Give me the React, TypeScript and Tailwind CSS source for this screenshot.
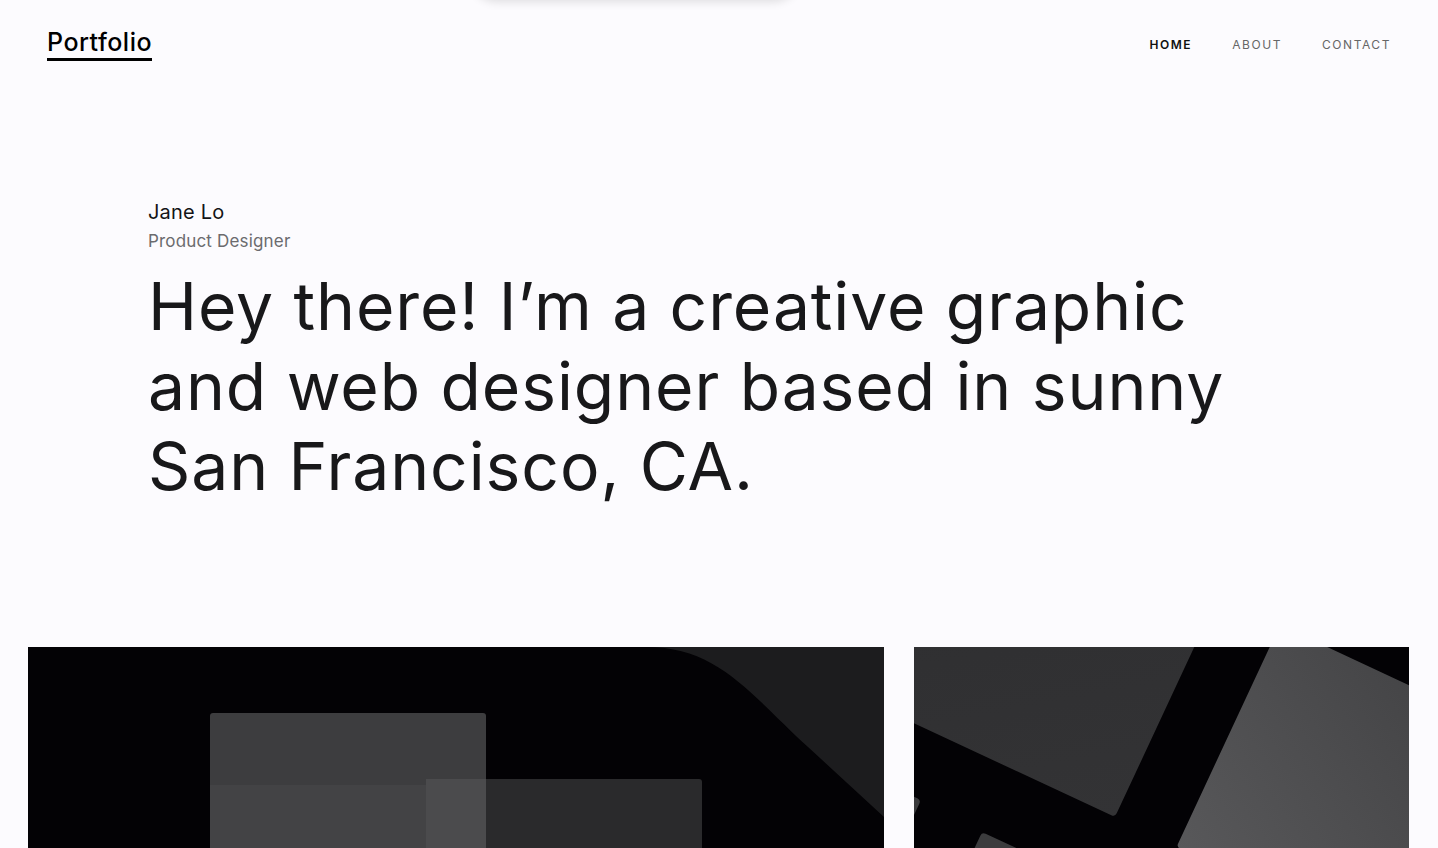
import React from 'react';

const font = { fontFamily: 'Inter, "DejaVu Sans", sans-serif' };

function LeftArt() {
  return (
    <svg viewBox="0 0 856 520" className="block w-full h-full" preserveAspectRatio="xMinYMin slice">
      <rect width="856" height="520" fill="#030205" />
      <path d="M618 0 C690 0 720 45 780 100 L856 170 V0 Z" fill="#1c1c1e" />
      <rect x="182" y="66" width="276" height="330" rx="3" fill="#3d3d3f" />
      <rect x="182" y="138" width="276" height="258" fill="#434345" />
      <rect x="398" y="132" width="276" height="276" rx="3" fill="#2a2a2c" />
      <rect x="398" y="132" width="60" height="264" fill="#4b4b4d" />
    </svg>
  );
}

function RightArt() {
  return (
    <svg viewBox="0 0 495 520" className="block w-full h-full" preserveAspectRatio="xMinYMin slice">
      <defs>
        <linearGradient id="gb" x1="1" y1="0" x2="0" y2="1">
          <stop offset="0" stopColor="#3c3c3e" />
          <stop offset="1" stopColor="#58585a" />
        </linearGradient>
        <linearGradient id="ga" x1="0" y1="0" x2="1" y2="1">
          <stop offset="0" stopColor="#2b2b2d" />
          <stop offset="1" stopColor="#333335" />
        </linearGradient>
      </defs>
      <rect width="495" height="520" fill="#030205" />
      <rect x="-420" y="-300" width="420" height="300" rx="4" fill="url(#ga)" transform="translate(201 170) rotate(25)" />
      <rect x="0" y="0" width="420" height="245" rx="4" fill="url(#gb)" transform="translate(366 -22) rotate(25)" />
      <rect x="-300" y="0" width="300" height="300" rx="4" fill="#3a3a3c" transform="translate(7 153) rotate(25)" />
      <rect x="0" y="0" width="300" height="300" rx="4" fill="#3c3c3e" transform="translate(68 185) rotate(25)" />
    </svg>
  );
}

export default function App() {
  return (
    <div className="relative min-h-screen bg-[#fcfbfe] text-[#141416] overflow-hidden" style={font}>
      <div className="absolute left-[468px] top-[-60px] w-[334px] h-[60px] rounded-[30px] bg-white shadow-[0_2px_10px_rgba(0,0,0,0.12)]" />

      <header className="h-[88px] flex items-center justify-between pl-[47px] pr-[47px]">
        <a className="inline-block text-[25px] font-medium leading-none tracking-[0.02em] text-black border-b-[3px] border-black pb-[3px] mt-[3px]">
          Portfolio
        </a>
        <nav className="flex items-center gap-[40px] text-[12px] tracking-[0.13em] leading-none mt-[2px]">
          <span className="font-semibold text-[#111]">HOME</span>
          <span className="text-[#666]">ABOUT</span>
          <span className="text-[#666]">CONTACT</span>
        </nav>
      </header>

      <section className="pl-[148px] pt-[112px]">
        <div className="text-[20px] leading-[24px] tracking-[0.01em] text-[#141416]">Jane Lo</div>
        <div className="mt-[7px] text-[17px] leading-[20px] tracking-[0.01em] text-[#6b6b6e]">Product Designer</div>
        <h1 className="mt-[15px] text-[66px] leading-[80px] font-normal tracking-[0.9px] text-[#18181a] max-w-[1120px]">
          Hey there! I’m a creative graphic and web designer based in sunny San Francisco, CA.
        </h1>
      </section>

      <section className="mt-[141px] flex gap-[30px] pl-[28px] pr-[29px] pb-10">
        <div className="w-[856px] h-[520px] shrink-0 overflow-hidden">
          <LeftArt />
        </div>
        <div className="flex-1 h-[520px] overflow-hidden">
          <RightArt />
        </div>
      </section>
    </div>
  );
}
